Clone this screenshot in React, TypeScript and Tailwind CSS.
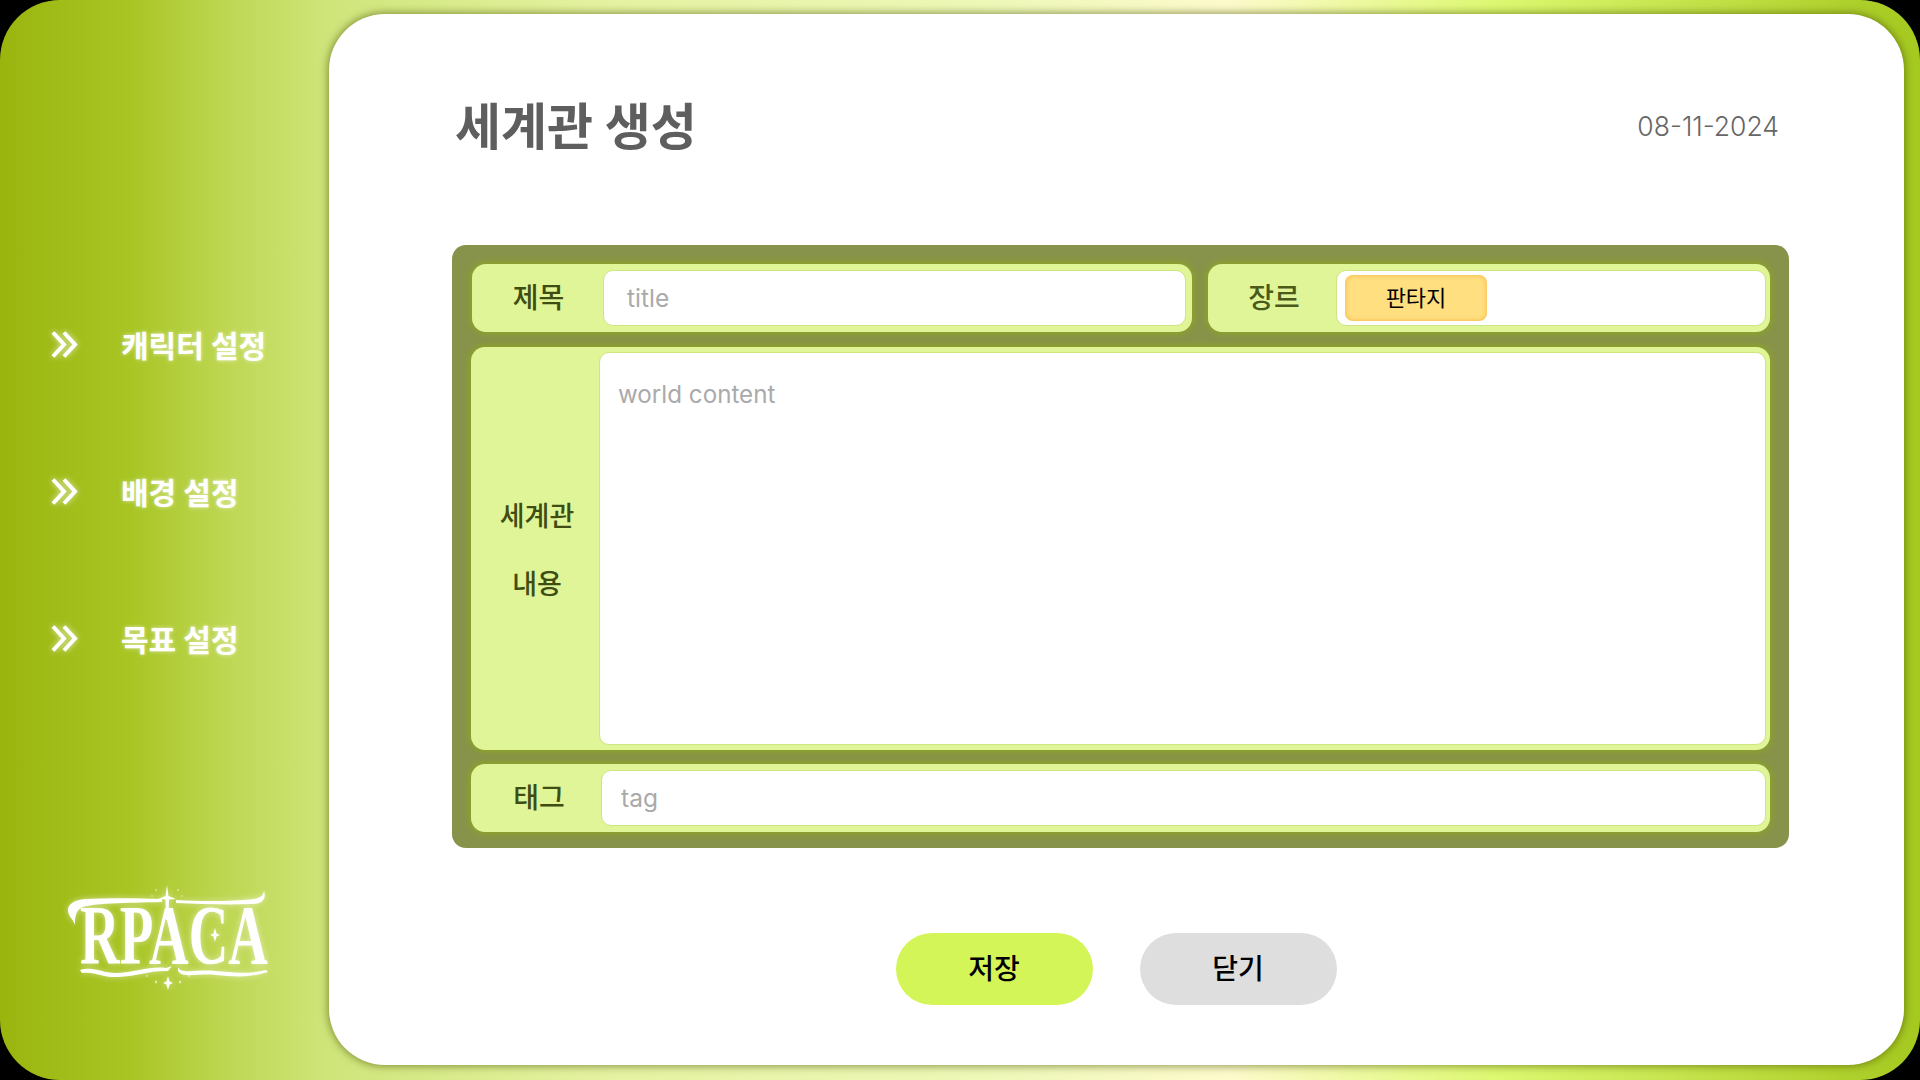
import React from 'react';

const menuItems = ['캐릭터 설정', '배경 설정', '목표 설정'];

function Chevrons() {
  return (
    <svg width="28" height="27" viewBox="0 0 28 27" fill="none" className="-mt-[3px] drop-shadow-[0_0_3px_rgba(255,255,255,0.7)]">
      <path d="M2 1.5 L13 13.5 L2 25.5" stroke="#ffffff" strokeWidth="4" />
      <path d="M13 1.5 L24 13.5 L13 25.5" stroke="#ffffff" strokeWidth="4" />
    </svg>
  );
}

function Spark({ x, y, r }: { x: number; y: number; r: number }) {
  const w = r * 0.22;
  return (
    <path
      d={`M${x} ${y - r} L${x + w} ${y - w} L${x + r * 0.7} ${y} L${x + w} ${y + w} L${x} ${y + r} L${x - w} ${y + w} L${x - r * 0.7} ${y} L${x - w} ${y - w} Z`}
      fill="#ffffff"
    />
  );
}

function Logo() {
  return (
    <svg width="206" height="112" viewBox="0 0 206 112" className="overflow-visible drop-shadow-[0_0_3px_rgba(255,255,255,0.55)]">
      {/* top swashes */}
      <path d="M96 17 C70 16 40 16 20 17 C8 18 2 22 2 28 C2 34 7 37 9 43 C9 36 9 30 15 26 C24 21 60 21 96 20 Z" fill="#ffffff" />
      <path d="M110 18 C140 20 170 19 188 17 C194 16 197 14 198 9 C201 18 195 22 187 22 C160 23 135 22 110 21 Z" fill="#ffffff" />
      {/* star on top of the P-A join */}
      <path d="M101 3 L102.5 14 L110 17 L103 17.5 L102.5 38 L100 38 L99.5 17.5 L92 17 L99.5 14 Z" fill="#ffffff" />
      <Spark x={90} y={8} r={1.5} />
      <Spark x={112} y={8} r={1.5} />
      <Spark x={86} y={14} r={1.2} />
      <Spark x={116} y={14} r={1.2} />
      <text
        x="108"
        y="82"
        textAnchor="middle"
        textLength="188"
        lengthAdjust="spacingAndGlyphs"
        fill="#ffffff"
        fontFamily="'Liberation Serif', serif"
        fontWeight="700"
        fontSize="84"
      >
        RPACA
      </text>
      <Spark x={149} y={53} r={7} />
      {/* bottom swashes */}
      <path d="M14 88 C30 84 36 92 52 91 C70 90 84 84 100 86 L106 84 L102 89 C86 88 72 94 52 95 C36 96 30 89 16 91 Z" fill="#ffffff" />
      <path d="M112 85 C116 93 130 87 150 89 C165 90 180 93 200 88 L202 90 C180 97 165 94 150 93 C132 91 118 97 112 89 Z" fill="#ffffff" />
      <Spark x={102} y={101} r={7} />
      <Spark x={90} y={100} r={2} />
      <Spark x={114} y={100} r={2} />
      <Spark x={81} y={94} r={1.5} />
      <Spark x={123} y={94} r={1.5} />
    </svg>
  );
}

export default function App() {
  return (
    <div className="w-[1920px] h-[1080px] bg-black overflow-hidden font-['Inter','Noto_Sans_CJK_KR',sans-serif]">
      <div className="w-full h-full flex rounded-[60px] bg-[linear-gradient(90deg,#9ab50e_0%,#a8c524_6.8%,#bdd650_11.5%,#cfe57a_17%,#e4f2a0_31%,#eef8b8_52%,#fdfacc_64%,#dcf870_78%,#b8d838_93%,#a5c91f_100%)]">
        {/* Sidebar */}
        <aside className="w-[329px] shrink-0 flex flex-col">
          <nav className="flex flex-col gap-[111px] pt-[328px] pl-[51px]">
            {menuItems.map((item) => (
              <div key={item} className="h-[36px] flex items-center">
                <div className="w-[70px] shrink-0">
                  <Chevrons />
                </div>
                <span className="text-[30px] font-bold text-white [text-shadow:0_0_4px_rgba(255,255,255,0.6)] leading-none whitespace-nowrap">
                  {item}
                </span>
              </div>
            ))}
          </nav>
          <div className="mt-[224px] pl-[66px]">
            <Logo />
          </div>
        </aside>

        {/* Main card */}
        <main className="flex-1 mt-[14px] mb-[15px] mr-[16px] bg-white rounded-[56px] shadow-[0_0_8px_1px_rgba(70,80,0,0.6)] flex flex-col pl-[123px] pr-[115px]">
          <header className="h-[231px] shrink-0 flex justify-between items-start pr-[10px]">
            <h1 className="mt-[79px] ml-[3px] text-[50px] leading-[68px] font-bold text-[#5e5e5e]">세계관 생성</h1>
            <span className="mt-[95px] text-[26.5px] leading-[34px] font-light text-[#666666]">08-11-2024</span>
          </header>

          <section className="h-[603px] rounded-[14px] bg-[#87934a] pt-[19px] pl-[19px] pr-[19px] pb-[16px] flex flex-col gap-[15px]">
            <div className="flex gap-[16px] h-[68px] shrink-0 ml-[1px]">
              <div className="w-[720px] flex items-center bg-[#dff598] rounded-[14px] shadow-[0_0_7px_1px_#8fa81e] pr-[6px]">
                <label className="w-[131px] shrink-0 pl-[2px] text-center text-[28px] font-medium text-[#3f4d12]">제목</label>
                <input
                  placeholder="title"
                  className="flex-1 h-[56px] bg-white rounded-[10px] border border-[#cfe57f] pl-[23px] text-[24.5px] placeholder:text-[#aaaaaa] outline-none"
                />
              </div>
              <div className="flex-1 flex items-center bg-[#dff598] rounded-[14px] shadow-[0_0_7px_1px_#8fa81e] pr-[4px]">
                <label className="w-[128px] shrink-0 pl-[4px] text-center text-[28px] font-medium text-[#4a5a1a]">장르</label>
                <div className="flex-1 h-[56px] bg-white rounded-[10px] border border-[#cfe57f] flex items-center pl-[8px]">
                  <span className="w-[142px] h-[46px] flex items-center justify-center rounded-[8px] bg-[#ffdf80] shadow-[inset_0_0_5px_rgba(245,170,50,0.8)] text-[22px] text-black">
                    판타지
                  </span>
                </div>
              </div>
            </div>

            <div className="h-[403px] shrink-0 flex items-center bg-[#dff598] rounded-[14px] shadow-[0_0_7px_1px_#8fa81e] pr-[4px]">
              <label className="w-[128px] shrink-0 pl-[4px] pt-[5px] text-center text-[27px] font-medium leading-[68px] text-[#3f4d12]">
                세계관
                <br />
                내용
              </label>
              <textarea
                placeholder="world content"
                className="flex-1 h-[393px] resize-none bg-white rounded-[10px] border border-[#cfe57f] px-[18px] py-[26px] text-[24.2px] leading-[32px] placeholder:text-[#aaaaaa] outline-none"
              />
            </div>

            <div className="h-[68px] shrink-0 -mt-[1px] flex items-center bg-[#dff598] rounded-[14px] shadow-[0_0_7px_1px_#8fa81e] pr-[4px]">
              <label className="w-[130px] shrink-0 pl-[6px] text-center text-[28px] font-medium text-[#3f4d12]">태그</label>
              <input
                placeholder="tag"
                className="flex-1 h-[56px] bg-white rounded-[10px] border border-[#cfe57f] pl-[19px] text-[24.5px] placeholder:text-[#aaaaaa] outline-none"
              />
            </div>
          </section>

          <div className="mt-[85px] flex justify-center gap-[47px] pr-[9px]">
            <button className="w-[197px] h-[72px] rounded-full bg-[#d4f558] text-[28px] font-medium text-black">저장</button>
            <button className="w-[197px] h-[72px] rounded-full bg-[#dedede] text-[28px] font-medium text-black">닫기</button>
          </div>
        </main>
      </div>
    </div>
  );
}
